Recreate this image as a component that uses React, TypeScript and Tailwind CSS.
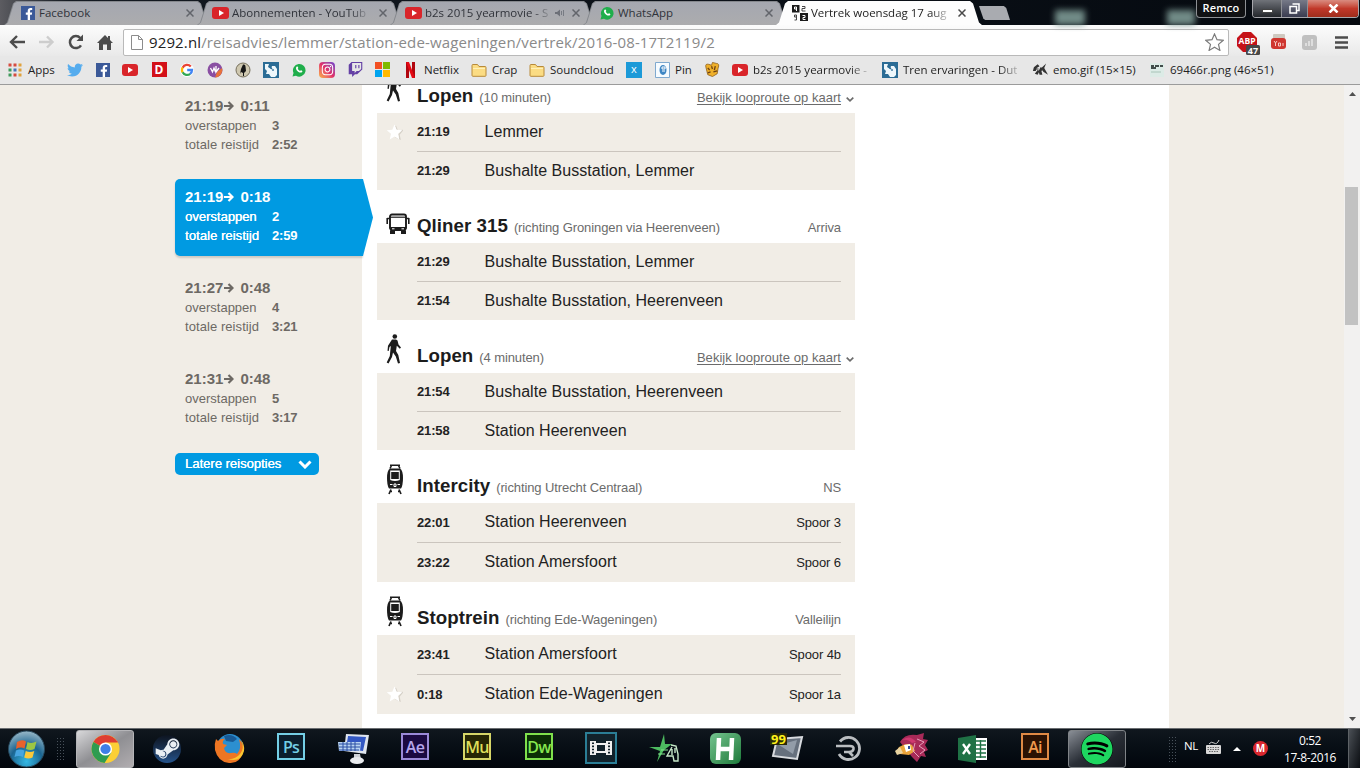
import React from "react";
import {
  FaFacebookF, FaTwitter, FaTwitch, FaInstagram, FaSteamSymbol, FaSpotify,
} from "react-icons/fa";

type Kids = { children?: React.ReactNode };

/* ---------- small icons ---------- */
const Fb = () => (
  <span className="flex h-[14px] w-[14px] items-end justify-end bg-[#3b5998] text-white"><FaFacebookF size={12} /></span>
);
const Yt = () => (
  <span className="flex h-[12px] w-[17px] items-center justify-center rounded-[3px] bg-[#d9252a]">
    <svg width="6" height="6" viewBox="0 0 6 6"><path d="M1 0l5 3-5 3z" fill="#fff" /></svg>
  </span>
);
const Wa = () => (
  <svg width="14" height="14" viewBox="0 0 14 14">
    <path d="M0.5 13.5l1-3.6A6.3 6.3 0 1 1 4 12.7z" fill="#1fae4b" />
    <path d="M4.6 3.7c.8-.8 1.4 0 1.7 1.2l-.6.9c.5 1 1.300 1.800 2.300 2.200l.9-.8c1.200.4 2 1 1.200 1.800-2.400 2.400-7.900-2.800-5.500-5.300z" fill="#fff" />
  </svg>
);
const Folder = () => (
  <svg width="16" height="14" viewBox="0 0 16 14">
    <path d="M1 12.500V2.500q0-1 1-1h4.500l1.500 2h6q1 0 1 1v8q0 .8-1 .8H2q-1 0-1-.8z" fill="#fbdc83" stroke="#b88a3a" />
    <path d="M2 5.500h12" stroke="#fff0b8" />
  </svg>
);
const Google = () => (
  <svg width="14" height="14" viewBox="0 0 14 14" fill="none" strokeWidth="2.300">
    <circle cx="7" cy="7" r="6.900" fill="#fff" />
    <path d="M10.800 3.500A5 5 0 0 0 2.600 4.700" stroke="#ea4335" />
    <path d="M2.600 4.600a5 5 0 0 0 0 4.800" stroke="#fbbc05" />
    <path d="M2.600 9.300a5 5 0 0 0 7.600 1.500" stroke="#34a853" />
    <path d="M10.100 10.900A5 5 0 0 0 12 7H7.200" stroke="#4285f4" />
  </svg>
);
const Swirl = () => (
  <svg width="16" height="16" viewBox="0 0 16 16">
    <circle cx="8" cy="8" r="7.500" fill="#8a4fa3" /><path d="M8 15.500A7.500 7.500 0 0 0 15 6l-5 4z" fill="#e8733a" />
    <path d="M3.500 6l2 4 1.500-4 1.500 4M9 4v6l3-4" stroke="#fff" fill="none" strokeWidth="1.300" />
  </svg>
);
const Bird = () => (
  <svg width="16" height="16" viewBox="0 0 16 16">
    <circle cx="8" cy="8" r="7" fill="#cfc8b0" stroke="#77705d" /><path d="M8 2.500q2.500-.5 2.500 2L11 9l-2 2v3H8v-3l-2-1-1 2 1-5z" fill="#171717" />
  </svg>
);
const Dump = () => (
  <svg width="16" height="16" viewBox="0 0 16 16">
    <rect width="16" height="16" fill="#2b6c95" />
    <path d="M2 2h4l-1 3 3 2 1-3h3l2 3v6l-2 2H8L6 12H3l1-3-2-2z" fill="#eef7fb" /><path d="M6 4l3 3M10 7v2M3 13h2" stroke="#2b6c95" strokeWidth="1.300" />
  </svg>
);
const Apps = () => (
  <svg width="14" height="14" viewBox="0 0 14 14">
    {["#d64b3f", "#d64b3f", "#e0a23c", "#3d9a5b", "#4673b8", "#e0a23c", "#3d9a5b", "#d64b3f", "#e0a23c"].map((c, i) => (
      <rect key={i} x={(i % 3) * 5 + 0.500} y={Math.floor(i / 3) * 5 + 0.500} width="3" height="3" fill={c} />
    ))}
  </svg>
);
const Windows = () => (
  <svg width="15" height="15" viewBox="0 0 15 15">
    <path d="M0 0h7v7H0z" fill="#f25022" /><path d="M8 0h7v7H8z" fill="#7fba00" /><path d="M0 8h7v7H0z" fill="#00a4ef" /><path d="M8 8h7v7H8z" fill="#ffb900" />
  </svg>
);
const Netflix = () => (
  <svg width="16" height="16" viewBox="0 0 16 16"><path d="M3 0h3v16H3zM9 0h3v16H9z" fill="#b1060f" /><path d="M3 0h3l6 16H9z" fill="#e50914" /></svg>
);
const Bee = () => (
  <svg width="17" height="15" viewBox="0 0 17 15">
    <path d="M2 5q-1-4 3-3l3 1 1-3 4 1q4 0 2 5l-1 6-5 3-5-2z" fill="#efb02a" stroke="#8a5a14" strokeWidth=".8" />
    <path d="M4 6l2 2M8 4l1 3M12 4l-1 4M4 11l3-1M10 10l4-1" stroke="#6d4212" fill="none" strokeWidth="1.400" />
  </svg>
);
const Emo = () => (
  <svg width="17" height="13" viewBox="0 0 17 13">
    <path d="M1 8l1-4 4-3 2 2-3 2-1 3zM8 12L7 8l2-4 3 1-2 3 1 4zM3 11l3-4 2 1-2 4zM10 5l5-5-2 5 4 7-5-3z" fill="#333" />
    <path d="M2 6h5M9 7h3" stroke="#333" />
  </svg>
);

/* ---------- tabs ---------- */
type TabProps = { icon: React.ReactNode; title: string; active?: boolean; sound?: boolean; cls?: string };
const CloseX = ({ dark }: { dark?: boolean }) => (
  <svg width="8" height="8" viewBox="0 0 8 8"><path d="M0.500 0.500l7 7M7.500 0.500l-7 7" stroke={dark ? "#4a4a4a" : "#62656b"} strokeWidth="1.500" /></svg>
);
function Tab({ icon, title, active, sound, cls = "" }: TabProps) {
  return (
    <div className={"-mr-[13px] h-[24px] w-[206px] shrink-0 [clip-path:polygon(0_100%,3px_90%,9px_10%,12px_0,194px_0,197px_10%,203px_90%,100%_100%)] " + (active ? "z-10 bg-[#fdfdfd]" : "bg-[#85888d]")}>
      <div className={"flex h-full items-center pr-[16px] pl-[15px] [clip-path:polygon(1px_100%,4px_90%,10px_10%,13px_1px,193px_1px,196px_10%,202px_90%,205px_100%)] " + (active ? "bg-[#fdfdfd]" : "bg-linear-to-b from-[#a4a7b0] to-[#acacae]")}>
        <span className="flex w-[17px] justify-center">{icon}</span>
        <span className={"ml-[3px] text-[11.5px] whitespace-nowrap [mask-image:linear-gradient(to_right,#000_88%,rgba(0,0,0,0.25))] " + (active ? "text-[#222] " : "text-[#30333a] ") + cls}>{title}</span>
        <span className="ml-auto flex items-center gap-[7px]">
          {sound && (
            <svg width="10" height="8" viewBox="0 0 10 8"><path d="M0 3h2l3-2.500v7L2 5H0z" fill="#6d7078" /><path d="M6.500 2v4M8.500 1v6" stroke="#777b83" /></svg>
          )}
          <CloseX dark={active} />
        </span>
      </div>
    </div>
  );
}
const NineIcon = () => (
  <svg width="16" height="16" viewBox="0 0 16 16">
    <path d="M0 0h7.500v7.500H0zM8 8h8v8H8z" fill="#1b1b1b" /><path d="M2.500 2h2v2h-2zM4.500 3v3M10.500 10.500h2.500v2h-2v2h2.500" stroke="#fff" fill="none" />
    <path d="M10 1.500h3v2h-3v2.500h3.500M4.500 12H2.500v-2h2v5h-2" stroke="#444" fill="none" />
  </svg>
);

function TabStrip() {
  return (
    <div className="flex h-[25px] shrink-0 bg-linear-to-r from-[#5c5c61] from-0% via-[#141a22] via-5% to-[#05090f] pt-px">
      <div className="flex pl-[4px]">
        <Tab icon={<Fb />} title="Facebook" cls="[mask-image:none]" />
        <Tab icon={<Yt />} title="Abonnementen - YouTub" />
        <Tab icon={<Yt />} title="b2s 2015 yearmovie - S" sound />
        <Tab icon={<Wa />} title="WhatsApp" cls="[mask-image:none]" />
        <Tab icon={<NineIcon />} title="Vertrek woensdag 17 aug" active />
      </div>
      <div className="mt-[5px] ml-[10px] h-[14px] w-[31px] bg-[#a9abb0] [clip-path:polygon(0_0,80%_0,88%_15%,100%_100%,20%_100%,14%_90%)]" />
      <div className="mt-[9px] ml-[45px] h-[15px] w-[30px] bg-[#7d9994] opacity-90 blur-[3px]" />
      <div className="mt-[9px] ml-[82px] h-[15px] w-[28px] bg-[#7d9994] opacity-90 blur-[3px]" />
      <div className="z-10 -mt-px ml-auto flex h-[18px] w-[50px] items-center justify-center rounded-b-[4px] border border-t-0 border-[#8d9094] bg-[#101113] text-[11px] font-semibold tracking-[0.2px] text-white">Remco</div>
      <div className="-mt-px mr-[1px] ml-[6px] flex h-[18px] w-[107px] overflow-hidden rounded-b-[4px] border border-t-0 border-[#a7a7ac]">
        <div className="flex w-[28px] items-center justify-center bg-linear-to-b from-[#707379] to-[#24272c]"><span className="mt-[4px] h-[4px] w-[11px] border border-[#444] bg-white" /></div>
        <div className="flex w-[27px] items-center justify-center border-x border-[#8f9096] bg-linear-to-b from-[#777a88] to-[#3a3c50]">
          <svg width="11" height="11" viewBox="0 0 11 11" fill="none"><path d="M3.500 1h6.500v6.500H8" stroke="#fff" strokeWidth="1.500" /><path d="M1 3.500h6.500V10H1z" stroke="#fff" strokeWidth="1.500" /></svg>
        </div>
        <div className="flex flex-1 items-center justify-center bg-linear-to-b from-[#d98b80] via-[#c1382a] to-[#9f2d1c]">
          <svg width="11" height="9" viewBox="0 0 11 9"><path d="M1.500 0.500l8 8M9.500 0.500l-8 8" stroke="#fff" strokeWidth="2.500" /></svg>
        </div>
      </div>
    </div>
  );
}

/* ---------- toolbar ---------- */
function Toolbar() {
  return (
    <div className="flex h-[31px] shrink-0 items-center bg-linear-to-b from-[#fcfcfc] to-[#e9e9e9] pt-[3px]">
      <svg className="ml-[9px]" width="17" height="14" viewBox="0 0 17 14" fill="none"><path d="M16 7H3M8 1L2 7l6 6" stroke="#4c4c4c" strokeWidth="2.400" /></svg>
      <svg className="ml-[13px]" width="16" height="14" viewBox="0 0 16 14" fill="none"><path d="M0 7h12M8 1.500L13.500 7 8 12.500" stroke="#cdcdcd" strokeWidth="2.400" /></svg>
      <svg className="ml-[13px]" width="16" height="16" viewBox="0 0 16 16"><path d="M13 11.300A6 6 0 1 1 12.300 4" stroke="#4c4c4c" strokeWidth="2.500" fill="none" /><path d="M15 0.500v6.500H8.500z" fill="#4c4c4c" /></svg>
      <svg className="ml-[13px]" width="16" height="15" viewBox="0 0 16 15"><path d="M8 0L0 8h2v7h4V9.500h4V15h4V8h2l-3-3V1h-2v2z" fill="#4c4c4c" /></svg>
      <div className="ml-[10px] flex h-[27px] w-[1106px] items-center rounded-[2px] border border-[#b9b9b9] bg-white">
        <svg className="ml-[7px]" width="12" height="15" viewBox="0 0 12 15"><path d="M.5.5h7l4 4v10H.5z M7.500.500v4h4" fill="#fff" stroke="#8c8c8c" /></svg>
        <span className="ml-[6px] text-[15px] tracking-[0.13px] whitespace-nowrap text-[#8a8a8a]"><span className="text-[#222]">9292.nl</span>/reisadvies/lemmer/station-ede-wageningen/vertrek/2016-08-17T2119/2</span>
        <svg className="mr-[4px] ml-auto" width="19" height="18" viewBox="0 0 19 18"><path d="M9.500 1l2.500 5.700 6.200.6-4.700 4.100 1.400 6-5.400-3.200-5.400 3.200 1.400-6L.8 7.300 7 6.700z" fill="#fff" stroke="#7b7b7b" strokeWidth="1.200" /></svg>
      </div>
      <div className="mt-[3px] ml-[8px] w-[25px] shrink-0">
        <svg width="25" height="26" viewBox="0 0 25 26">
          <path d="M6 1h8l6 6v8l-6 6H6l-6-6V7z" fill="#c51218" />
          <text x="10" y="12.500" fill="#fff" fontSize="8" fontWeight="bold" textAnchor="middle" textLength="17" lengthAdjust="spacingAndGlyphs">ABP</text>
          <rect x="9" y="14" width="14" height="10" rx="1.500" fill="#474747" /><text x="16" y="22.500" fill="#fff" fontSize="9" fontWeight="bold" textAnchor="middle">47</text>
        </svg>
      </div>
      <svg className="ml-[8px]" width="18" height="17" viewBox="0 0 18 17"><rect x="3" width="12" height="9" rx="1" fill="#cfc9c0" /><rect x="1" y="4" width="15" height="11" rx="3" fill="#cf362f" /><path d="M4 7l1.500 2L7 7M5.500 9v3M8.500 9h2v3h-2zM13 9v3" stroke="#f7c9c5" fill="none" /></svg>
      <svg className="ml-[14px]" width="15" height="15" viewBox="0 0 15 15"><rect width="15" height="15" rx="3" fill="#c0c0c0" /><path d="M4 11V8M7 11V6M10 11V4" stroke="#e8e8e8" strokeWidth="1.500" /></svg>
      <svg className="ml-[18px]" width="13" height="13" viewBox="0 0 13 13"><path d="M0 1.500h13M0 6.500h13M0 11.500h13" stroke="#4c4c4c" strokeWidth="2.600" /></svg>
    </div>
  );
}

function Bm({ w, icon, label, fade }: { w: string; icon: React.ReactNode; label?: string; fade?: boolean }) {
  return (
    <div className={"flex shrink-0 items-center " + w}>
      <span className="flex w-[16px] shrink-0 items-center justify-center">{icon}</span>
      {label && <span className={"ml-[5px] whitespace-nowrap " + (fade ? "[mask-image:linear-gradient(to_right,#000_85%,rgba(0,0,0,0.25))]" : "")}>{label}</span>}
    </div>
  );
}
function Bookmarks() {
  return (
    <div className="flex h-[29px] shrink-0 items-center border-b border-[#9b9b9b] bg-[#e7e7e7] pb-px pl-[7px] text-[11.5px] text-[#222]">
      <Bm w="w-[60px]" icon={<Apps />} label="Apps" />
      <Bm w="w-[28px]" icon={<FaTwitter size={16} color="#55acee" />} />
      <Bm w="w-[27px]" icon={<Fb />} />
      <Bm w="w-[29px]" icon={<Yt />} />
      <Bm w="w-[28px]" icon={<span className="flex h-[15px] w-[15px] items-center justify-center bg-[#d31018] text-[12px] font-bold text-white">D</span>} />
      <Bm w="w-[28px]" icon={<Google />} />
      <Bm w="w-[28px]" icon={<Swirl />} />
      <Bm w="w-[28px]" icon={<Bird />} />
      <Bm w="w-[28px]" icon={<Dump />} />
      <Bm w="w-[28px]" icon={<Wa />} />
      <Bm w="w-[28px]" icon={<span className="flex h-[16px] w-[16px] items-center justify-center rounded-[4px] bg-linear-to-tr from-[#f9b23c] via-[#e02d6b] to-[#6d3bd0] text-white"><FaInstagram size={13} /></span>} />
      <Bm w="w-[27px]" icon={<FaTwitch size={15} color="#6441a5" />} />
      <Bm w="w-[29px]" icon={<Windows />} />
      <Bm w="w-[68px]" icon={<Netflix />} label="Netflix" />
      <Bm w="w-[58px]" icon={<Folder />} label="Crap" />
      <Bm w="w-[97px]" icon={<Folder />} label="Soundcloud" />
      <Bm w="w-[28px]" icon={<span className="flex h-[16px] w-[16px] items-center justify-center bg-[#1c9ad8] pb-[1px] text-[11px] text-white">x</span>} />
      <Bm w="w-[50px]" icon={<svg width="15" height="16" viewBox="0 0 15 16"><path d="M.5.500h14v15H.5z" fill="#f6fbff" stroke="#7fa9cf" /><ellipse cx="8" cy="8" rx="3.500" ry="5" fill="#3e86c4" /><path d="M7 5h3v2H7zM7 9h3" stroke="#fff" fill="none" /></svg>} label="Pin" />
      <Bm w="w-[28px]" icon={<Bee />} />
      <Bm w="w-[150px]" icon={<Yt />} label="b2s 2015 yearmovie -" fade />
      <Bm w="w-[150px]" icon={<Dump />} label="Tren ervaringen - Dut" fade />
      <Bm w="w-[117px]" icon={<Emo />} label="emo.gif (15×15)" />
      <Bm w="w-[130px]" icon={<svg width="14" height="14" viewBox="0 0 14 14"><path d="M0 0h14v14H0z" fill="#dcebe6" /><path d="M1 3h3M5 3h4M10 3h3M1 5h5" stroke="#414c4a" strokeWidth="2" /><path d="M1 9h10" stroke="#a8c4b8" /></svg>} label="69466r.png (46×51)" />
    </div>
  );
}

/* ---------- page ---------- */
const Arrow = () => (
  <svg className="mt-[2px] mx-[1px]" width="10" height="10" viewBox="0 0 10 10"><path d="M0 5h8M4.500 1l4 4-4 4" stroke="currentColor" strokeWidth="2.200" fill="none" /></svg>
);
function Option({ from, to, n, total, on }: { from: string; to: string; n: string; total: string; on?: boolean }) {
  return (
    <div className={"mb-[14px] h-[77px] w-[188px] pt-[7px] pl-[10px] text-[13px] leading-[19px] " + (on ? "relative rounded-l-[5px] bg-[#009ae2] text-white shadow-[0_2px_2px_rgba(0,0,0,0.15)]" : "text-[#6d6964]")}>
      <div className="mb-px flex h-[20px] items-center text-[15px] font-bold">{from}<Arrow /><span className="ml-[5px]">{to}</span></div>
      <div className="flex"><span className={"w-[87px] " + (on ? "[text-shadow:0.3px_0_0_currentColor]" : "")}>overstappen</span><b>{n}</b></div>
      <div className="flex"><span className={"w-[87px] tracking-[0.07px] " + (on ? "[text-shadow:0.3px_0_0_currentColor]" : "")}>totale reistijd</span><b className="tracking-[-0.15px]">{total}</b></div>
      {on && <div className="absolute top-0 left-[187px] h-[77px] w-[11px] bg-[#009ae2] [clip-path:polygon(0_0,1px_0,100%_50%,1px_100%,0_100%)]" />}
    </div>
  );
}

const Walk = () => (
  <svg width="16" height="30" viewBox="0 0 16 30">
    <circle cx="8.800" cy="2.500" r="2.300" fill="#1c1c1c" />
    <path d="M6 5.500h4l1.500 1 1 4 2.500 3-1.200 1.200-3-3L10 17l2.300 4 1.700 8-2 .5-2.200-7L7 18.500l-1 4.500-3.500 6.500L.7 28.600 3.800 22l1-10-1.300 1-.8 4-1.200-.3.500-5z" fill="#1c1c1c" />
  </svg>
);
const Bus = () => (
  <svg width="24" height="22" viewBox="0 0 24 22">
    <rect x="4" y="1.500" width="16" height="15" rx="2" fill="#fff" stroke="#1c1c1c" strokeWidth="1.900" />
    <path d="M4 4.200h16" stroke="#1c1c1c" strokeWidth="1.200" /><path d="M3.500 14h17l-1 4H4.500zM4 17.500h5v3.500H4zM15 17.500h5v3.500h-5z" fill="#1c1c1c" />
    <path d="M1.200 5v6M22.800 5v6M1.200 5.500H4M20 5.500h3" stroke="#1c1c1c" strokeWidth="1.600" /><path d="M6 15.800h2.500M15.500 15.800H18" stroke="#fff" />
  </svg>
);
const Train = () => (
  <svg width="18" height="31" viewBox="0 0 18 31">
    <path d="M4 1.200h10M5.500 1.500L4 4.500M12.500 1.500l1.500 3" stroke="#1c1c1c" strokeWidth="1.600" fill="none" />
    <path d="M4 4.500h10q3 2 3 9.500t-2 10.500H3Q1 21.500 1 14t3-9.500z" fill="#1c1c1c" />
    <path d="M4.200 6.500h9.600v9.500q-4.800 2-9.600 0z" fill="#fff" /><path d="M5.200 8h7.600v7H5.200z" fill="#1c1c1c" />
    <path d="M4 20.500h2.500M11.500 20.500H14M8 20h2v2.500H8z" stroke="#fff" strokeWidth="1" fill="none" /><path d="M5 25.500l-2 4.500M13 25.500l2 4.500M6 27.500H5M13 27.500h-1" stroke="#1c1c1c" strokeWidth="1.700" />
  </svg>
);
const Star = () => (
  <svg width="17" height="17" viewBox="0 0 17 17"><path d="M9.500 2l2 5 5-.5-3.500 4 1 4.500-4.500-2" fill="none" stroke="#d5d0c7" strokeWidth="1.200" /><path d="M8.500 0.500l2.200 5.300 5.600.4-4.300 3.600 1.300 5.600-4.800-3-4.800 3L5 9.800.7 6.200l5.600-.4z" fill="#fff" /></svg>
);

type Stop = { t: string; name: string; spoor?: string; star?: boolean };
type Leg = { icon: React.ReactNode; name: string; sub: string; op?: string; stops: Stop[]; tall?: boolean };
const legs: Leg[] = [
  { icon: <span className="-translate-x-px -translate-y-[3px]"><Walk /></span>, name: "Lopen", sub: "(10 minuten)", stops: [{ t: "21:19", name: "Lemmer", star: true }, { t: "21:29", name: "Bushalte Busstation, Lemmer" }] },
  { icon: <span className="translate-x-[3px]"><Bus /></span>, name: "Qliner 315", sub: "(richting Groningen via Heerenveen)", op: "Arriva", stops: [{ t: "21:29", name: "Bushalte Busstation, Lemmer" }, { t: "21:54", name: "Bushalte Busstation, Heerenveen" }] },
  { icon: <span className="-translate-x-px -translate-y-px"><Walk /></span>, name: "Lopen", sub: "(4 minuten)", stops: [{ t: "21:54", name: "Bushalte Busstation, Heerenveen" }, { t: "21:58", name: "Station Heerenveen" }] },
  { icon: <Train />, name: "Intercity", sub: "(richting Utrecht Centraal)", op: "NS", tall: true, stops: [{ t: "22:01", name: "Station Heerenveen", spoor: "Spoor 3" }, { t: "23:22", name: "Station Amersfoort", spoor: "Spoor 6" }] },
  { icon: <Train />, name: "Stoptrein", sub: "(richting Ede-Wageningen)", op: "Valleilijn", tall: true, stops: [{ t: "23:41", name: "Station Amersfoort", spoor: "Spoor 4b" }, { t: "0:18", name: "Station Ede-Wageningen", spoor: "Spoor 1a", star: true }] },
];

function LegBlock({ leg }: { leg: Leg }) {
  return (
    <section className="shrink-0">
      <div className="flex h-[53px] items-end pr-[14px] text-[13px] tracking-[-0.1px] text-[#6b6b6b]">
        <span className="mb-[8px] flex w-[40px] shrink-0 items-end justify-center pr-[4px]">{leg.icon}</span>
        <div className="mb-[3px] flex flex-1 items-baseline leading-[24px]">
          <h2 className="text-[18.7px] font-bold tracking-[0.05px] text-[#1c1c1c]">{leg.name}</h2>
          <span className="ml-[6px]">{leg.sub}</span>
          {leg.op ? <span className="ml-auto">{leg.op}</span> : (
            <span className="-mr-[14px] ml-auto flex items-center">
              <span className="tracking-[0.04px] underline underline-offset-2">Bekijk looproute op kaart</span>
              <svg className="mt-[2px] mr-[1px] ml-[5px]" width="8" height="5" viewBox="0 0 8 5"><path d="M.7.700L4 3.800 7.300.700" stroke="#6b6b6b" strokeWidth="1.700" fill="none" /></svg>
            </span>
          )}
        </div>
      </div>
      <div className="bg-[#f1ede6] pr-[14px] pl-[9px]">
        {leg.stops.map((s, i) => (
          <div key={i} className="flex items-center">
            <span className="flex w-[31px] shrink-0">{s.star && <Star />}</span>
            <div className={"flex flex-1 items-center text-[#222] " + (leg.tall ? "h-[39px] " : "h-[38px] ") + (i === 0 ? "box-content border-b border-[#cbc5be]" : "")}>
              <b className="w-[67.6px] text-[13px] tracking-[-0.15px]">{s.t}</b>
              <span className={"text-[16px] tracking-[0.03px] " + (leg.tall ? "pb-[2px]" : "")}>{s.name}</span>
              {s.spoor && <span className="ml-auto text-[13px] tracking-[-0.1px]">{s.spoor}</span>}
            </div>
          </div>
        ))}
      </div>
    </section>
  );
}

function Page() {
  return (
    <div className="flex h-[643px] shrink-0 overflow-hidden bg-[#f1ede6] font-['Liberation_Sans',Arial,sans-serif]">
      <aside className="w-[362px] shrink-0 pt-[3px] pl-[175px]">
        <Option from="21:19" to="0:11" n="3" total="2:52" />
        <Option from="21:19" to="0:18" n="2" total="2:59" on />
        <Option from="21:27" to="0:48" n="4" total="3:21" />
        <Option from="21:31" to="0:48" n="5" total="3:17" />
        <button className="mt-[15px] flex h-[22px] w-[144px] items-center justify-between rounded-[5px] bg-[#009ae2] pr-[7px] pl-[10px] text-[13px] text-white [text-shadow:0.3px_0_0_currentColor]">
          Latere reisopties
          <svg width="14" height="9" viewBox="0 0 14 9"><path d="M1.500 1.500L7 7l5.500-5.500" stroke="#fff" strokeWidth="3" fill="none" /></svg>
        </button>
      </aside>
      <main className="w-[807px] shrink-0 bg-white pl-[15px]">
        <div className="-mt-[25px] flex w-[478px] flex-col">
          {legs.map((l, i) => <LegBlock key={i} leg={l} />)}
        </div>
      </main>
      <div className="ml-auto flex w-[16px] flex-col items-center bg-[#f2f1f0] py-[7px]">
        <svg width="7" height="4" viewBox="0 0 7 4"><path d="M0 4l3.500-4L7 4z" fill="#505050" /></svg>
        <div className="mt-[91px] mr-px h-[138px] w-[13px] bg-[#c2c2c2]" />
        <svg className="mt-auto" width="7" height="4" viewBox="0 0 7 4"><path d="M0 0l3.500 4L7 0z" fill="#505050" /></svg>
      </div>
    </div>
  );
}

/* ---------- taskbar ---------- */
const Slot = ({ children, lit }: Kids & { lit?: boolean }) => (
  <div className={"mx-[2px] flex h-[38px] w-[58px] shrink-0 items-center justify-center rounded-[3px] " + (lit ? "border border-[#b5b5b8] bg-linear-to-br from-[#d8d8da] via-[#8f8f93] to-[#b1adb0]" : "")}>{children}</div>
);
const Adobe = ({ t, c }: { t: string; c: string }) => (
  <div className={"mb-[4px] flex h-[27px] w-[28px] items-center justify-center border-2 text-[16px] leading-none font-semibold tracking-[-0.7px] " + c}>{t}</div>
);

function Taskbar() {
  return (
    <div className="flex h-[40px] shrink-0 items-center border-t border-[#6a6d70] bg-linear-to-b from-[#10171e] to-[#02060c]">
      <svg className="ml-[7px]" width="39" height="38" viewBox="0 0 39 38">
        <defs><radialGradient id="orb" cx=".5" cy=".85" r=".9"><stop offset="0" stopColor="#35b8e4" /><stop offset=".5" stopColor="#1b6591" /><stop offset="1" stopColor="#a9c3cf" /></radialGradient></defs>
        <circle cx="19.500" cy="19" r="18" fill="url(#orb)" stroke="#27485c" />
        <path d="M10 12q5-3 9-.5l-1.500 7q-4-2-8.500.5z" fill="#e8622c" /><path d="M20.500 12q4 2 9-.5l-2 7.500q-4 2-8.500 0z" fill="#9cc644" />
        <path d="M9 20.500q4-2 8.300 0L16 27q-4-2-8.500 0z" fill="#47a5e0" /><path d="M18.800 21q4 2 8.500 0L25.500 27.500q-4 2-8.300 0z" fill="#fbc83a" />
      </svg>
      <span className="mr-[8px] ml-[10px] h-[24px] w-[10px] bg-[radial-gradient(#48515a_0.8px,transparent_1px)] bg-size-[3px_3px]" />
      <Slot lit>
        <svg width="29" height="30" viewBox="0 0 30 30">
          <circle cx="15" cy="15" r="14.500" fill="#fbcf35" /><path d="M15 15L2.500 7.700A14.500 14.500 0 0 1 27.600 7.800H15z" fill="#de3e32" />
          <path d="M2.500 7.700A14.500 14.500 0 0 0 14 29.500l7-11L15 15 8.800 11.500z" fill="#2f9c50" /><path d="M15 7.800h12.600" stroke="#de3e32" />
          <circle cx="15" cy="15" r="6.800" fill="#fff" /><circle cx="15" cy="15" r="5.300" fill="#3f7fe6" />
        </svg>
      </Slot>
      <Slot><span className="flex h-[28px] w-[28px] items-center justify-center rounded-full bg-linear-to-b from-[#0d1420] to-[#24528a] text-[#e9eef3]"><FaSteamSymbol size={27} /></span></Slot>
      <Slot>
        <svg width="31" height="31" viewBox="0 0 31 31">
          <circle cx="16" cy="14" r="13" fill="#2c8fd0" /><path d="M10 3q8-3 13 3l-4 3-7-1z" fill="#185a96" />
          <path d="M2 6l2 2q3-3 7-2-3 2-2 5l4 1-3 3q1 6 7 5 4-1 6 1 5-5 2-15 6 6 4 13-3 12-14 11T1 17Q0 11 2 6z" fill="#ee7623" /><path d="M27 7q4 8-1 14-5 6-13 5 14 4 17-8 1-6-3-11z" fill="#fbc52f" />
        </svg>
      </Slot>
      <Slot><Adobe t="Ps" c="border-[#74cfe6] bg-[#0b1f2e] text-[#74cfe6]" /></Slot>
      <Slot>
        <svg width="31" height="32" viewBox="0 0 31 32">
          <path d="M8 1l23 1-3 19-22-3z" fill="#dfe5ee" /><path d="M10 3l18 1-3 14-17-2z" fill="#3358c4" />
          <path d="M0 9h23l-1 9H1z" fill="#b9d4f2" /><path d="M1 11h21M1 14h21M1 17h20M5 9v9M9 9v9M13 9v9M17 9v9" stroke="#2b4ea4" />
          <path d="M16 21h6l1 5h-7z" fill="#cfd3d8" /><ellipse cx="19" cy="27.500" rx="7" ry="3.500" fill="#e9ebee" />
        </svg>
      </Slot>
      <Slot><Adobe t="Ae" c="border-[#9a8ad8] bg-[#1b0a42] text-[#b6a6ec]" /></Slot>
      <Slot><Adobe t="Mu" c="border-[#d6d668] bg-[#272704] text-[#dede5a]" /></Slot>
      <Slot><Adobe t="Dw" c="border-[#7fe04c] bg-[#0b2f05] text-[#86e850]" /></Slot>
      <Slot>
        <span className="mb-[1px] flex h-[32px] w-[32px] items-center justify-center border-2 border-[#2b7e96] bg-[#12222b]">
          <svg width="22" height="16" viewBox="0 0 22 16"><path d="M0 1h6v2h10V1h6v14h-6v-2H6v2H0z" fill="#f0f0f0" /><path d="M7 5h8v6H7z" fill="#12222b" /><path d="M3 2.500v11M19 2.500v11" stroke="#12222b" strokeWidth="2" strokeDasharray="1.600 1.500" /></svg>
        </span>
      </Slot>
      <Slot>
        <svg width="31" height="32" viewBox="0 0 31 32"><path d="M16 1l1 10h7l-8 6-7 12 3-11-11-4h11z" fill="#4dbb60" /><path d="M13 17h7M10 21h7" stroke="#86e890" /><path d="M23 12l5 1 2 8v7h-4l-1-5h-6l5-9M24 16v6M27 15v5" stroke="#c7e8c9" fill="none" strokeWidth="1.400" /></svg>
      </Slot>
      <Slot>
        <span className="flex h-[31px] w-[31px] items-center justify-center rounded-[6px] bg-linear-to-br from-[#74c490] to-[#197a3a]">
          <svg width="20" height="24" viewBox="0 0 20 24"><path d="M4 1L3 23M17 1l-1 22M3 12h14" stroke="#fff" strokeWidth="4.500" /></svg>
        </span>
      </Slot>
      <Slot>
        <svg width="34" height="34" viewBox="0 0 34 34"><path d="M7 7l25-2-5 22-24-3z" fill="#66707d" stroke="#d7dade" strokeWidth="2" /><path d="M9 13l18-5-4 14z" fill="#929ca8" /><rect y="1" width="17" height="12" fill="#2a2a08" /><text x="1" y="11.500" fill="#fff21a" fontSize="13" fontWeight="bold" textLength="15">99</text></svg>
      </Slot>
      <Slot>
        <svg width="27" height="26" viewBox="0 0 27 26" fill="none"><path d="M4 5.500A11 11 0 1 1 3 18" stroke="#babdc0" strokeWidth="2.800" /><path d="M0 10h14q4 0 3.500 3T13 16H8M13 16l4 4" stroke="#babdc0" strokeWidth="2.600" /></svg>
      </Slot>
      <Slot>
        <svg width="33" height="31" viewBox="0 0 33 31"><path d="M5 9q5-9 17-7l7-2-1 6 5 1-3 5 3 5-4 2 2 5-5-1-4 6-5-5z" fill="#a82a58" /><path d="M3 15q8-6 14-3l3 6-6 4-9-1z" fill="#e9a33a" /><path d="M9 12l6-1 1 6-5 2z" fill="#fff" /><path d="M13 13h2v3h-2z" fill="#2b4b9c" /><path d="M0 18l5-4 3 6-6 2z" fill="#e8d3a0" /><path d="M22 6l7 3-5 4 6 4-5 4M20 10l-2 8 6 6" stroke="#e9a4bd" fill="none" /><path d="M7 7q8-6 14 2l-4 1q-4-4-10-3z" fill="#d0386f" /></svg>
      </Slot>
      <Slot>
        <svg width="30" height="28" viewBox="0 0 30 28"><path d="M14 3h15v22H14z" fill="#fff" /><path d="M16 6h12M16 10h12M16 14h12M16 18h12M16 22h12M22.500 5v18" stroke="#1f7145" strokeWidth="1.400" /><path d="M0 3l18-3v28L0 25z" fill="#1f7145" /><path d="M5 9l7 10M12 9L5 19" stroke="#fff" strokeWidth="2.300" /></svg>
      </Slot>
      <Slot><Adobe t="Ai" c="border-[#e08a45] bg-[#2b1203] text-[#f09a4e]" /></Slot>
      <div className="mx-[2px] flex h-[38px] w-[58px] shrink-0 items-center justify-center rounded-[3px] border border-[#808488] bg-linear-to-br from-[#8a8f96] via-[#2a2f37] to-[#15191f]">
        <span className="rounded-full bg-black"><FaSpotify size={32} color="#1ed760" /></span>
      </div>
      <span className="ml-[40px] h-[26px] w-[8px] bg-[radial-gradient(#48515a_0.8px,transparent_1px)] bg-size-[3px_3px]" />
      <span className="mb-[5px] ml-[8px] w-[20px] text-[11.5px] tracking-[-0.3px] text-white">NL</span>
      <svg className="mb-[3px] ml-[2px]" width="15" height="14" viewBox="0 0 15 14"><path d="M3 4Q5 1 8 3t5-3" stroke="#ccc" fill="none" /><rect y="5" width="15" height="9" rx="1" fill="#d9d9d9" /><path d="M1.500 7.500h12M1.500 9.500h12M3 11.500h9" stroke="#666" strokeDasharray="1.500 1" /></svg>
      <svg className="mt-px ml-[12px]" width="8" height="4" viewBox="0 0 8 4"><path d="M0 4l4-4 4 4z" fill="#fff" /></svg>
      <span className="ml-[12px] flex h-[15px] w-[15px] items-center justify-center rounded-full bg-[#d9272e] text-[10px] font-bold text-white">M</span>
      <div className="ml-[13px] w-[58px] text-center text-[12px] leading-[17px] tracking-[-0.4px] whitespace-nowrap text-white"><div>0:52</div><div>17-8-2016</div></div>
      <div className="ml-auto h-full w-[12px] border-l border-[#5d6266] bg-linear-to-br from-[#4b5056] to-[#0b0e12]" />
    </div>
  );
}

export default function App() {
  return (
    <div className="flex h-[768px] w-[1360px] flex-col overflow-hidden font-['Open_Sans','Noto_Sans',sans-serif]">
      <TabStrip />
      <Toolbar />
      <Bookmarks />
      <Page />
      <Taskbar />
    </div>
  );
}
